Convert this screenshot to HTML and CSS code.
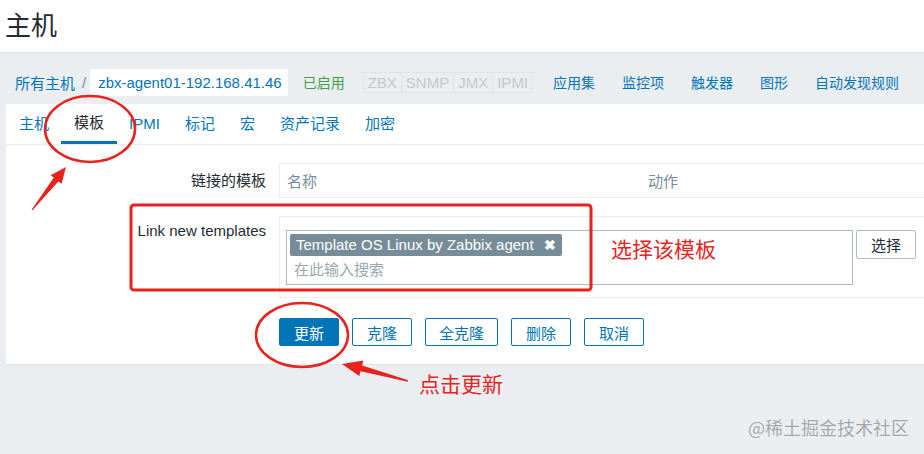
FILE: index.html
```html
<!DOCTYPE html>
<html lang="zh-CN">
<head>
    <meta charset="UTF-8">
    <meta name="viewport" content="width=device-width, initial-scale=1.0">
    <title>主机</title>
    <link rel="stylesheet" href="styles.css">
</head>
<body>
    <header class="page-title">主机</header>

    <div class="content">
        <div class="nav-row">
            <a class="crumb">所有主机</a>
            <span class="crumb-sep">/</span>
            <span class="crumb-host">zbx-agent01-192.168.41.46</span>
            <span class="status-on">已启用</span>
            <span class="status-tags">
                <span>ZBX</span><span>SNMP</span><span>JMX</span><span>IPMI</span>
            </span>
            <a class="nav-link first">应用集</a>
            <a class="nav-link">监控项</a>
            <a class="nav-link">触发器</a>
            <a class="nav-link">图形</a>
            <a class="nav-link">自动发现规则</a>
        </div>

        <div class="panel">
            <ul class="tabs">
                <li>主机</li>
                <li class="active">模板</li>
                <li>IPMI</li>
                <li>标记</li>
                <li>宏</li>
                <li>资产记录</li>
                <li>加密</li>
            </ul>

            <div class="form">
                <div class="form-row">
                    <label class="form-label label-mid">链接的模板</label>
                    <div class="linked-table">
                        <span class="col-name">名称</span>
                        <span class="col-action">动作</span>
                    </div>
                </div>

                <div class="form-row row-new">
                    <label class="form-label">Link new templates</label>
                    <div class="field-box">
                        <div class="multiselect">
                            <span class="ms-tag">Template OS Linux by Zabbix agent <b class="ms-remove">&#10006;</b></span>
                            <span class="ms-placeholder">在此输入搜索</span>
                        </div>
                        <button class="btn-grey">选择</button>
                    </div>
                </div>

                <div class="form-actions">
                    <button class="btn primary">更新</button>
                    <button class="btn">克隆</button>
                    <button class="btn">全克隆</button>
                    <button class="btn">删除</button>
                    <button class="btn">取消</button>
                </div>
            </div>
        </div>
    </div>

    <!-- screenshot annotations -->
    <svg class="marks" width="924" height="454" viewBox="0 0 924 454">
        <ellipse cx="90" cy="129" rx="45" ry="33" fill="none" stroke="#e8231d" stroke-width="2.5"/>
        <polygon fill="#e8231d" points="66,167 61.6,183.8 58.4,181.4 32.4,210.3 31.6,209.7 53.8,177.6 50.6,175.2"/>
        <rect x="131" y="205" width="460" height="85" rx="3" fill="none" stroke="#e8231d" stroke-width="3"/>
        <ellipse cx="302" cy="335" rx="46" ry="32" fill="none" stroke="#e8231d" stroke-width="2.5"/>
        <polygon fill="#e8231d" points="342,364 363.4,360.6 362.1,365.4 408.2,380.2 407.8,381.8 360.5,371.2 359.2,376.0"/>
    </svg>
    <div class="note note-select">选择该模板</div>
    <div class="note note-update">点击更新</div>
    <div class="watermark">@稀土掘金技术社区</div>
</body>
</html>
```

FILE: styles.css
```css
body {
    margin: 0;
    font-family: "Liberation Sans", Arial, "Noto Sans CJK SC", sans-serif;
    font-size: 15px;
    color: #1f2c33;
    background: #ebeef0;
    width: 924px;
    height: 454px;
    overflow: hidden;
    position: relative;
}
.page-title {
    background: #fff;
    height: 53px;
    line-height: 52px;
    padding-left: 5px;
    font-size: 26px;
    border-bottom: 1px solid #dfe4e7;
    box-sizing: border-box;
}
.content {
    padding-left: 6px;
}
.nav-row {
    height: 51px;
    display: flex;
    align-items: center;
    padding: 7px 0 0 9px;
    box-sizing: border-box;
}
.crumb {
    color: #0275b8;
}
.crumb-sep {
    color: #768d99;
    margin: 0 4px 0 7px;
}
.crumb-host {
    background: #fff;
    color: #0275b8;
    height: 27px;
    line-height: 27px;
    padding: 0 6px 0 8px;
}
.status-on {
    color: #429e47;
    font-size: 14px;
    margin-left: 15px;
}
.status-tags {
    display: flex;
    margin-left: 18px;
    border: 1px solid #dfe4e7;
    color: #c2c9ce;
    height: 19px;
    line-height: 19px;
}
.status-tags span {
    padding: 0 4px;
    border-left: 1px solid #dfe4e7;
}
.status-tags span:first-child {
    border-left: none;
}
.nav-link {
    color: #0275b8;
    font-size: 14px;
    margin-left: 27px;
}
.nav-link.first {
    margin-left: 20px;
}
.panel {
    background: #fff;
    height: 261px;
    border-bottom: 1px solid #dfe4e7;
    box-sizing: border-box;
}
.tabs {
    list-style: none;
    margin: 0;
    padding: 0;
    display: flex;
    height: 40px;
    border-bottom: 1px solid #ebeef0;
}
.tabs li {
    padding: 0 13px;
    margin-right: -1px;
    line-height: 39px;
    color: #0275b8;
    border-bottom: 3px solid transparent;
}
.tabs li.active {
    color: #1f2c33;
    border-bottom-color: #0275b8;
    line-height: 37px;
}
.form {
    padding-top: 18px;
}
.form-row {
    display: flex;
    align-items: flex-start;
}
.form-label {
    width: 273px;
    flex-shrink: 0;
    text-align: right;
    padding-right: 13px;
    box-sizing: border-box;
}
.label-mid {
    line-height: 35px;
}
.linked-table {
    flex: 1;
    height: 35px;
    display: flex;
    align-items: center;
    border-top: 1px solid #ebeef0;
    border-bottom: 1px solid #ebeef0;
    border-left: 1px solid #ebeef0;
    color: #768d99;
    box-sizing: border-box;
}
.col-name {
    padding-left: 7px;
    width: 361px;
}
.row-new {
    margin-top: 18px;
}
.row-new .form-label {
    padding-top: 6px;
}
.field-box {
    flex: 1;
    height: 82px;
    display: flex;
    align-items: flex-start;
    padding: 13px 0 0 6px;
    border-top: 1px solid #ebeef0;
    border-bottom: 1px solid #ebeef0;
    border-left: 1px solid #ebeef0;
    box-sizing: border-box;
}
.multiselect {
    width: 567px;
    flex-shrink: 0;
    height: 55px;
    border: 1px solid #acbbc2;
    box-sizing: border-box;
    padding: 3px 3px 0 3px;
    display: flex;
    flex-direction: column;
    align-items: flex-start;
}
.ms-tag {
    background: #768d99;
    color: #fff;
    border-radius: 2px;
    height: 22px;
    line-height: 22px;
    padding: 0 6px 0 6px;
}
.ms-remove {
    font-size: 14px;
    margin-left: 6px;
}
.ms-placeholder {
    color: #9aa8b0;
    margin-left: 4px;
    margin-top: 2px;
}
.btn-grey {
    margin-left: 3px;
    width: 60px;
    height: 29px;
    background: #fff;
    border: 1px solid #acbbc2;
    border-radius: 2px;
    color: #1f2c33;
    font-family: inherit;
    font-size: 15px;
    padding: 0;
}
.form-actions {
    display: flex;
    gap: 13px;
    margin: 20px 0 0 273px;
}
.btn {
    height: 28px;
    min-width: 60px;
    padding: 0 13px;
    background: #fff;
    border: 1px solid #0275b8;
    border-radius: 2px;
    color: #0275b8;
    font-family: inherit;
    font-size: 15px;
}
.btn.primary {
    background: #0275b8;
    color: #fff;
}
.marks {
    position: absolute;
    left: 0;
    top: 0;
}
.note {
    position: absolute;
    color: #e8231d;
    font-size: 21px;
    font-family: "Noto Sans CJK SC", sans-serif;
    line-height: 24px;
}
.note-select {
    left: 611px;
    top: 236px;
}
.note-update {
    left: 419px;
    top: 371px;
}
.watermark {
    position: absolute;
    left: 748px;
    top: 416px;
    font-size: 18px;
    line-height: 22px;
    color: #a3a6aa;
    font-family: "Noto Sans CJK SC", sans-serif;
    text-shadow: 0 0 1px #fff;
}
```
